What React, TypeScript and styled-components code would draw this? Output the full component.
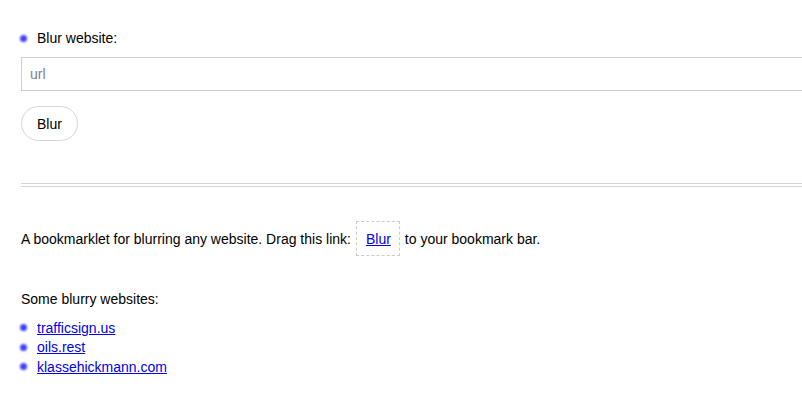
import React from "react";
import styled, { createGlobalStyle } from "styled-components";

const GlobalStyle = createGlobalStyle`
  html, body {
    margin: 0;
    padding: 0;
    overflow: hidden;
    background: #fff;
  }
  body {
    font-family: "Liberation Sans", Arial, sans-serif;
    font-size: 14px;
    color: #000;
  }
`;

const Page = styled.div`
  display: flex;
  flex-direction: column;
  padding: 30px 0 0 21px;
  width: 820px;
`;

const Form = styled.form`
  display: flex;
  flex-direction: column;
  align-items: flex-start;
`;

const Label = styled.label`
  display: flex;
  align-items: center;
  gap: 10px;
  line-height: 16px;
`;

const Dot = styled.span`
  width: 7px;
  height: 7px;
  margin-left: -1px;
  border-radius: 50%;
  background: #4040ff;
  filter: blur(1.3px);
  flex-shrink: 0;
`;

const UrlInput = styled.input`
  box-sizing: border-box;
  width: 100%;
  height: 34px;
  margin-top: 11px;
  padding: 0 8px;
  border: 1px solid #cfcfcf;
  border-radius: 0;
  font: inherit;
  color: #000;
  outline: none;
  &::placeholder {
    color: #7a7f99;
  }
`;

const PillButton = styled.button`
  margin-top: 15px;
  height: 35px;
  padding: 0 15px;
  border: 1px solid #d6d6d6;
  border-radius: 18px;
  background: #fff;
  font: inherit;
  color: #000;
`;

const Rule = styled.div`
  margin-top: 42px;
  height: 2px;
  border-top: 1px solid #d3d3d3;
  border-bottom: 1px solid #d3d3d3;
`;

const Intro = styled.p`
  display: flex;
  align-items: center;
  margin: 34px 0 0;
  line-height: 16px;
  white-space: nowrap;
`;

const DragBox = styled.span`
  display: inline-flex;
  align-items: center;
  box-sizing: border-box;
  height: 35px;
  margin: 0 5px;
  padding: 0 8px 0 9px;
  border: 1px dashed #cccccc;
`;

const Link = styled.a`
  color: #0000ee;
  text-decoration: underline;
`;

const Heading = styled.p`
  margin: 35px 0 0;
  line-height: 16px;
`;

const SiteList = styled.ul`
  list-style: none;
  margin: 11px 0 0;
  padding: 0;
  display: flex;
  flex-direction: column;
`;

const SiteItem = styled.li`
  display: flex;
  align-items: center;
  gap: 10px;
  height: 19.5px;
`;

const sites = ["trafficsign.us", "oils.rest", "klassehickmann.com"];

export default function App() {
  return (
    <>
      <GlobalStyle />
      <Page>
        <Form onSubmit={(e) => e.preventDefault()}>
          <Label>
            <Dot />
            Blur website:
          </Label>
          <UrlInput placeholder="url" />
          <PillButton type="submit">Blur</PillButton>
        </Form>
        <Rule />
        <Intro>
          A bookmarklet for blurring any website. Drag this link:
          <DragBox>
            <Link href="#">Blur</Link>
          </DragBox>
          to your bookmark bar.
        </Intro>
        <Heading>Some blurry websites:</Heading>
        <SiteList>
          {sites.map((s) => (
            <SiteItem key={s}>
              <Dot />
              <Link href="#">{s}</Link>
            </SiteItem>
          ))}
        </SiteList>
      </Page>
    </>
  );
}
